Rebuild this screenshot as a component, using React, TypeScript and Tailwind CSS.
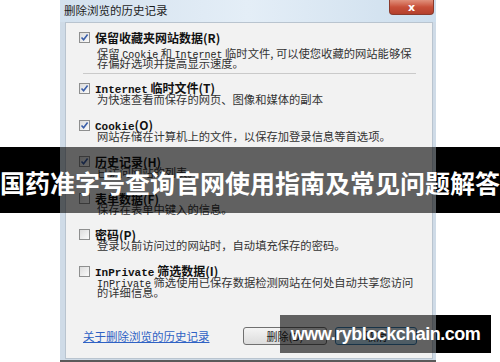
import React from "react";

const cjk = { fontFamily: '"Noto Sans CJK SC", "Noto Sans", sans-serif' };
const mono = { fontFamily: '"Liberation Mono", "Noto Sans CJK SC", monospace' };

function Checkbox({ checked }: { checked: boolean }) {
  return (
    <div className="w-[11px] h-[11px] shrink-0 border border-[#8e8f8f] bg-gradient-to-br from-[#dcdcdc] to-[#fbfbfb] flex items-center justify-center">
      {checked && (
        <svg width="9" height="9" viewBox="0 0 9 9">
          <path d="M1.5 4.5 L3.6 6.8 L7.6 1.6" fill="none" stroke="#3a5ea8" strokeWidth="1.6" />
        </svg>
      )}
    </div>
  );
}

function M({ children, bold }: { children: React.ReactNode; bold?: boolean }) {
  return (
    <span style={mono} className={bold ? "text-[11px] font-bold leading-[11px]" : "text-[10px] leading-[10px] text-[#222]"}>
      {children}
    </span>
  );
}

function Item({
  checked,
  label,
  lines,
  className,
  descClass,
}: {
  checked: boolean;
  label: React.ReactNode;
  lines: React.ReactNode[];
  className?: string;
  descClass?: string;
}) {
  return (
    <div className={"flex flex-col " + (className || "")}>
      <div className="flex items-center h-[11px] gap-[5px]">
        <Checkbox checked={checked} />
        <span className="text-[12px] leading-[11px] font-bold text-[#111] whitespace-nowrap">{label}</span>
      </div>
      <div className={"pl-[18px] text-[11.3px] leading-[10px] text-[#333] whitespace-nowrap " + (descClass || "")}>
        {lines.map((l, i) => (
          <div key={i} className="h-[10px]">
            {l}
          </div>
        ))}
      </div>
    </div>
  );
}

export default function App() {
  return (
    <div className="relative w-[500px] h-[362px] bg-white overflow-hidden" style={cjk}>
      <div className="ml-[60px] w-[376px] h-[362px] flex flex-col bg-[#cfdbe7] border-b-[2px] border-[#5a5a5a]">
        <div className="h-[22px] flex items-start justify-between bg-gradient-to-r from-[#d3e1ee] via-[#e4eef7] to-[#cddeed] shrink-0">
          <span className="ml-[4px] mt-[3px] text-[11.5px] leading-[14px] text-[#1c1c1c]">删除浏览的历史记录</span>
          <div className="mr-[2px] w-[45px] h-[15px] rounded-b-[4px] border border-t-0 border-[#8a3a2c] bg-gradient-to-b from-[#e0907c] via-[#c8503a] to-[#b4402c] flex items-center justify-center">
            <span className="text-white text-[11px] font-bold leading-[11px]" style={{ fontFamily: '"DejaVu Sans", sans-serif' }}>
              x
            </span>
          </div>
        </div>
        <div className="flex-1 ml-[5px] mr-[3px] mb-[1px] bg-[#f2f2f2] border border-[#b9c4cf] pl-[13px] pt-[9px] flex flex-col">
          <Item
            checked
            label={<>保留收藏夹网站数据(R)</>}
            descClass="mt-[5px]"
            lines={[
              <>
                保留 <M>Cookie</M> 和 <M>Internet</M> 临时文件, 可以使您收藏的网站能够保
              </>,
              <>存偏好选项并提高显示速度。</>,
            ]}
          />
          <div className="mt-[5px] ml-[4px] mr-[16px] h-px bg-[#cacaca]" />
          <Item
            checked
            className="mt-[9px]"
            label={
              <>
                <M bold>Internet</M> 临时文件(T)
              </>
            }
            lines={[<>为快速查看而保存的网页、图像和媒体的副本</>]}
          />
          <Item
            checked
            className="mt-[16px]"
            label={
              <>
                <M bold>Cookie</M>(O)
              </>
            }
            lines={[<>网站存储在计算机上的文件，以保存加登录信息等首选项。</>]}
          />
          <Item checked className="mt-[15px]" label={<>历史记录(H)</>} lines={[<>已访问网站的列表。</>]} />
          <Item checked={false} className="mt-[16px]" label={<>表单数据(F)</>} lines={[<>保存在表单中键入的信息。</>]} />
          <Item
            checked={false}
            className="mt-[15px]"
            label={<>密码(P)</>}
            lines={[<>登录以前访问过的网站时，自动填充保存的密码。</>]}
          />
          <Item
            checked={false}
            className="mt-[16px]"
            label={
              <>
                <M bold>InPrivate</M> 筛选数据(I)
              </>
            }
            lines={[
              <>
                <M>InPrivate</M> 筛选使用已保存数据检测网站在何处自动共享您访问
              </>,
              <>的详细信息。</>,
            ]}
          />
          <div className="mt-[30px] h-[18px] flex items-center justify-between pr-[15px]">
            <span className="ml-[4px] text-[11.5px] leading-[12px] text-[#2f62c4] underline">关于删除浏览的历史记录</span>
            <div className="flex gap-[8px]">
              <div className="w-[84px] h-[18px] rounded-[3px] border border-[#707070] bg-gradient-to-b from-[#f4f4f4] to-[#dcdcdc] flex items-center justify-center text-[11px] text-[#222]">
                删除(D)
              </div>
              <div className="w-[82px] h-[18px] rounded-[3px] border border-[#3c7fb1] bg-gradient-to-b from-[#eaf6fd] to-[#bee6fd] flex items-center justify-center text-[11px] text-[#222]">
                取消
              </div>
            </div>
          </div>
        </div>
      </div>

      <div className="absolute left-0 top-[147px] w-[500px] h-[66px] flex">
        <div className="w-[60px] bg-black" />
        <div className="w-[376px] bg-black/60" />
        <div className="flex-1 bg-black" />
        <div className="absolute inset-0 flex items-center justify-center pt-[3px]">
          <span className="text-white font-bold text-[25px] leading-[30px] whitespace-nowrap">
            国药准字号查询官网使用指南及常见问题解答
          </span>
        </div>
      </div>

      <div className="absolute left-[280px] top-[315px] w-[211px] h-[38px] flex">
        <div className="w-[156px] bg-black/60" />
        <div className="flex-1 bg-black" />
        <div className="absolute inset-0 flex items-center justify-center">
          <span
            className="text-white font-bold text-[18px] tracking-[-0.5px] leading-[20px]"
            style={{ fontFamily: '"Liberation Sans", Arial, sans-serif' }}
          >
            www.ryblockchain.com
          </span>
        </div>
      </div>
    </div>
  );
}
